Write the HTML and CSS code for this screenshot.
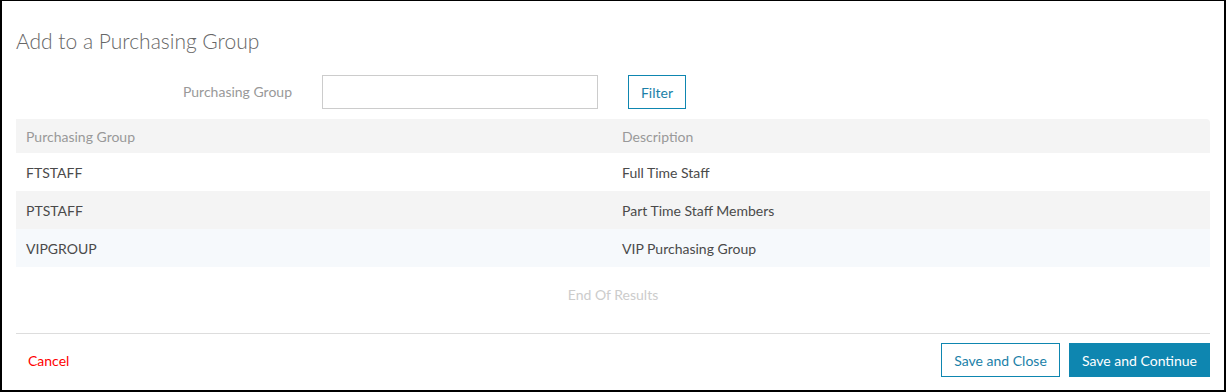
FILE: index.html
```html
<!DOCTYPE html>
<html lang="en">
<head>
    <meta charset="UTF-8">
    <title>Add to a Purchasing Group</title>
    <link rel="stylesheet" href="styles.css">
</head>
<body>
    <div class="modal">
        <h2 class="modal-title">Add to a Purchasing Group</h2>

        <form class="filter-row">
            <label for="group">Purchasing Group</label>
            <input type="text" id="group" name="group">
            <button type="button" class="btn btn-outline">Filter</button>
        </form>

        <div class="results">
            <div class="row head">
                <div class="cell">Purchasing Group</div>
                <div class="cell">Description</div>
            </div>
            <div class="row">
                <div class="cell">FTSTAFF</div>
                <div class="cell">Full Time Staff</div>
            </div>
            <div class="row alt">
                <div class="cell">PTSTAFF</div>
                <div class="cell">Part Time Staff Members</div>
            </div>
            <div class="row hover">
                <div class="cell">VIPGROUP</div>
                <div class="cell">VIP Purchasing Group</div>
            </div>
        </div>

        <div class="end">End Of Results</div>

        <div class="footer">
            <a href="#" class="cancel">Cancel</a>
            <div class="actions">
                <button type="button" class="btn btn-outline">Save and Close</button>
                <button type="button" class="btn btn-primary">Save and Continue</button>
            </div>
        </div>
    </div>
</body>
</html>
```

FILE: styles.css
```css
body {
    margin: 0;
    font-family: Lato, "Open Sans", sans-serif;
    font-size: 14px;
    color: #4a4a4a;
    background: #fff;
}
.modal {
    box-sizing: border-box;
    width: 1226px;
    height: 392px;
    border: 2px solid #000;
    border-top-width: 1px;
    padding: 0 14px;
}
.modal-title {
    margin: 25px 0 0 0;
    font-size: 21px;
    font-weight: 300;
    color: #666;
    line-height: 30px;
}
.filter-row {
    display: flex;
    align-items: center;
    margin-top: 19px;
    height: 34px;
}
.filter-row label {
    width: 276px;
    text-align: right;
    color: #999;
    padding-bottom: 2px;
}
.filter-row input {
    box-sizing: border-box;
    width: 276px;
    height: 34px;
    margin-left: 30px;
    border: 1px solid #ccc;
    font-family: inherit;
}
.filter-row .btn {
    margin-left: 30px;
    width: 58px;
    padding: 0;
}
.btn {
    box-sizing: border-box;
    height: 34px;
    font-family: inherit;
    font-size: 14px;
    padding: 0;
    white-space: nowrap;
    cursor: pointer;
}
.btn-outline {
    background: #fff;
    border: 1px solid #0e86b0;
    color: #1b7fa8;
}
.btn-primary {
    background: #0e86b0;
    border: 1px solid #0e86b0;
    color: #fff;
}
.results {
    margin-top: 10px;
}
.row {
    display: grid;
    grid-template-columns: 1fr 1fr;
    height: 38px;
    align-items: center;
}
.row.head {
    height: 34px;
    background: #f4f4f4;
    color: #999;
    border-top-right-radius: 4px;
}
.row.alt {
    background: #f4f4f4;
}
.row.hover {
    background: #f6f9fc;
}
.cell {
    padding: 0 10px;
}
.row .cell + .cell {
    padding-left: 9px;
}
.end {
    text-align: center;
    color: #ccc;
    margin-top: 20px;
    line-height: 16px;
}
.footer {
    display: flex;
    justify-content: space-between;
    align-items: center;
    margin-top: 30px;
    border-top: 1px solid #ddd;
    padding-top: 9px;
}
.cancel {
    color: #f00;
    text-decoration: none;
    margin-left: 12px;
}
.actions {
    display: flex;
    gap: 9px;
}
.actions .btn-outline {
    width: 119px;
}
.actions .btn-primary {
    width: 141px;
}
```
